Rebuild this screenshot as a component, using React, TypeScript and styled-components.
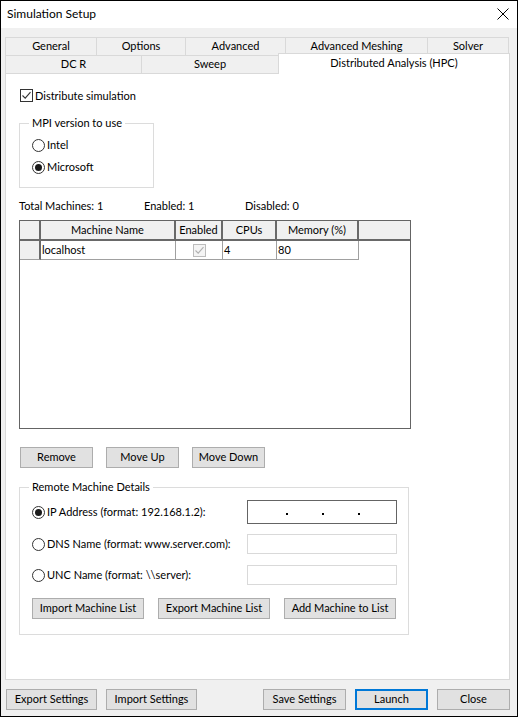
import React from "react";
import styled, { createGlobalStyle, css } from "styled-components";

const GlobalStyle = createGlobalStyle`
  html, body { margin: 0; padding: 0; background: #ffffff; }
  body {
    font-family: Lato, "Noto Sans", sans-serif;
    font-size: 11px;
    line-height: 14px;
    color: #000;
  }
  * { box-sizing: border-box; }
`;

const Window = styled.div`
  width: 518px;
  height: 717px;
  border: 1px solid #000;
  display: flex;
  flex-direction: column;
  background: #f0f0f0;
`;

const TitleBar = styled.div`
  height: 27px;
  flex: none;
  background: #fff;
  display: flex;
  align-items: center;
  justify-content: space-between;
  padding: 0 8px 1px 6px;
  font-size: 12px;
`;

const Body = styled.div`
  flex: 1;
  display: flex;
  flex-direction: column;
  padding: 9px 7px 0 4px;
`;

const TabRow = styled.div`
  display: flex;
  height: 18px;
  flex: none;
  align-items: flex-end;
`;

const Tab = styled.div<{ $w: number; $last?: boolean; $active?: boolean }>`
  width: ${(p) => p.$w}px;
  height: 18px;
  border-top: 1px solid #d9d9d9;
  border-left: 1px solid #d9d9d9;
  ${(p) => p.$last && css`border-right: 1px solid #d9d9d9;`}
  background: #f0f0f0;
  display: flex;
  align-items: center;
  justify-content: center;
  padding-bottom: 1px;
  ${(p) =>
    p.$active &&
    css`
      height: 21px;
      margin-top: -2px;
      margin-bottom: -1px;
      background: #fff;
      position: relative;
      z-index: 1;
      padding-bottom: 3px;
    `}
`;

const Panel = styled.div`
  width: 505px;
  height: 607px;
  flex: none;
  border: 1px solid #d9d9d9;
  background: #fff;
  display: flex;
  flex-direction: column;
  padding-left: 13px;
`;

const CheckRow = styled.label`
  margin-top: 15px;
  margin-left: 1px;
  height: 13px;
  display: flex;
  align-items: center;
  gap: 2px;
`;

const Box = styled.span<{ $disabled?: boolean }>`
  width: 13px;
  height: 13px;
  border: 1px solid ${(p) => (p.$disabled ? "#bcbcbc" : "#333")};
  background: ${(p) => (p.$disabled ? "#f4f4f4" : "#fff")};
  display: inline-flex;
  align-items: center;
  justify-content: center;
  flex: none;
`;

const Check = ({ disabled }: { disabled?: boolean }) => (
  <Box $disabled={disabled}>
    <svg width="11" height="11" viewBox="0 0 11 11">
      <path
        d="M1.5 5.5 L4.2 8.2 L9.5 2.2"
        fill="none"
        stroke={disabled ? "#b0b0b0" : "#333"}
        strokeWidth="1.1"
      />
    </svg>
  </Box>
);

const RadioCircle = styled.span<{ $on?: boolean }>`
  width: 13px;
  height: 13px;
  border-radius: 50%;
  border: 1px solid #333;
  background: #fff;
  display: inline-flex;
  align-items: center;
  justify-content: center;
  flex: none;
  &::after {
    content: "";
    width: 7px;
    height: 7px;
    border-radius: 50%;
    background: ${(p) => (p.$on ? "#1a1a1a" : "transparent")};
  }
`;

const RadioRow = styled.label<{ $top: number }>`
  margin-top: ${(p) => p.$top}px;
  height: 16px;
  display: flex;
  align-items: center;
  gap: 2px;
`;

const Group = styled.div<{ $w: number; $h: number; $top: number }>`
  width: ${(p) => p.$w}px;
  height: ${(p) => p.$h}px;
  flex: none;
  margin-top: ${(p) => p.$top}px;
  border: 1px solid #dcdcdc;
  display: flex;
  flex-direction: column;
  padding-left: 12px;
`;

const Legend = styled.span`
  align-self: flex-start;
  margin-top: -8px;
  margin-left: -3px;
  height: 14px;
  line-height: 14px;
  padding: 0 3px;
  background: #fff;
`;

const Totals = styled.div`
  margin-top: 11px;
  height: 14px;
  display: flex;
  align-items: center;
`;

const Stat = styled.span<{ $w: number }>`
  width: ${(p) => p.$w}px;
`;

const Grid = styled.div`
  margin-top: 7px;
  width: 392px;
  height: 209px;
  flex: none;
  border: 1px solid #646464;
  background: #fff;
  display: flex;
  flex-direction: column;
`;

const GridRow = styled.div<{ $head?: boolean }>`
  display: flex;
  height: ${(p) => (p.$head ? 20 : 19)}px;
`;

const HeadCell = styled.div<{ $w?: number }>`
  ${(p) => (p.$w ? css`width: ${p.$w}px;` : css`flex: 1;`)}
  background: #f0f0f0;
  border-bottom: 2px solid #696969;
  ${(p) => p.$w && css`border-right: 2px solid #696969;`}
  display: flex;
  align-items: center;
  justify-content: center;
`;

const RowHead = styled.div`
  width: 21px;
  background: #f0f0f0;
  border-right: 2px solid #696969;
  border-bottom: 1px solid #a0a0a0;
`;

const Cell = styled.div<{ $w: number; $center?: boolean }>`
  width: ${(p) => p.$w}px;
  border-right: 1px solid #a0a0a0;
  border-bottom: 1px solid #a0a0a0;
  display: flex;
  align-items: center;
  justify-content: ${(p) => (p.$center ? "center" : "flex-start")};
  padding-left: ${(p) => (p.$center ? 0 : 1)}px;
`;

const ButtonRow = styled.div<{ $top: number; $gap: number; $left?: number }>`
  margin-top: ${(p) => p.$top}px;
  margin-left: ${(p) => p.$left ?? 0}px;
  display: flex;
  gap: ${(p) => p.$gap}px;
`;

const Button = styled.button<{ $w: number; $primary?: boolean }>`
  width: ${(p) => p.$w}px;
  height: 21px;
  background: #e1e1e1;
  border: 1px solid #adadad;
  font-family: inherit;
  font-size: 11px;
  line-height: 14px;
  color: #000;
  padding: 0 0 1px;
  margin: 0;
  display: flex;
  align-items: center;
  justify-content: center;
  ${(p) => p.$primary && css`border: 2px solid #0078d7;`}
`;

const FieldRow = styled.div<{ $top: number; $h: number }>`
  margin-top: ${(p) => p.$top}px;
  height: ${(p) => p.$h}px;
  display: flex;
  align-items: center;
`;

const FieldLabel = styled.label`
  width: 215px;
  display: flex;
  align-items: center;
  gap: 2px;
`;

const TextBox = styled.div<{ $focus?: boolean }>`
  width: 150px;
  height: 100%;
  background: #fff;
  border: 1px solid ${(p) => (p.$focus ? "#646464" : "#d9d9d9")};
  display: flex;
  align-items: center;
`;

const IpBox = styled(TextBox)`
  padding-left: 38px;
  gap: 34px;
`;

const Dot = styled.span`
  width: 2px;
  height: 2px;
  background: #000;
  margin-top: 4px;
`;

const BottomBar = styled.div`
  margin-top: 9px;
  margin-left: 1px;
  display: flex;
  gap: 9px;
`;

const Spacer = styled.div`
  flex: 1;
`;

const App = () => (
  <>
    <GlobalStyle />
    <Window>
      <TitleBar>
        <span>Simulation Setup</span>
        <svg width="12" height="12" viewBox="0 0 12 12">
          <path d="M0.5 0.5 L11.5 11.5 M11.5 0.5 L0.5 11.5" stroke="#000" strokeWidth="1" />
        </svg>
      </TitleBar>
      <Body>
        <TabRow>
          <Tab $w={91}>General</Tab>
          <Tab $w={89}>Options</Tab>
          <Tab $w={100}>Advanced</Tab>
          <Tab $w={142}>Advanced Meshing</Tab>
          <Tab $w={82} $last>Solver</Tab>
        </TabRow>
        <TabRow>
          <Tab $w={136}>DC R</Tab>
          <Tab $w={137}>Sweep</Tab>
          <Tab $w={232} $last $active>Distributed Analysis (HPC)</Tab>
        </TabRow>
        <Panel>
          <CheckRow>
            <Check />
            <span>Distribute simulation</span>
          </CheckRow>

          <Group $w={135} $h={65} $top={21}>
            <Legend>MPI version to use</Legend>
            <RadioRow $top={7}>
              <RadioCircle />
              <span>Intel</span>
            </RadioRow>
            <RadioRow $top={6}>
              <RadioCircle $on />
              <span>Microsoft</span>
            </RadioRow>
          </Group>

          <Totals>
            <Stat $w={125}>Total Machines: 1</Stat>
            <Stat $w={101}>Enabled: 1</Stat>
            <Stat $w={80}>Disabled: 0</Stat>
          </Totals>

          <Grid>
            <GridRow $head>
              <HeadCell $w={21} />
              <HeadCell $w={135}>Machine Name</HeadCell>
              <HeadCell $w={47}>Enabled</HeadCell>
              <HeadCell $w={54}>CPUs</HeadCell>
              <HeadCell $w={82}>Memory (%)</HeadCell>
              <HeadCell />
            </GridRow>
            <GridRow>
              <RowHead />
              <Cell $w={135}>localhost</Cell>
              <Cell $w={47} $center>
                <Check disabled />
              </Cell>
              <Cell $w={54}>4</Cell>
              <Cell $w={82}>80</Cell>
            </GridRow>
          </Grid>

          <ButtonRow $top={18} $gap={13} $left={1}>
            <Button $w={73}>Remove</Button>
            <Button $w={73}>Move Up</Button>
            <Button $w={73}>Move Down</Button>
          </ButtonRow>

          <Group $w={390} $h={148} $top={19}>
            <Legend>Remote Machine Details</Legend>
            <FieldRow $top={6} $h={24}>
              <FieldLabel>
                <RadioCircle $on />
                <span>IP Address (format: 192.168.1.2):</span>
              </FieldLabel>
              <IpBox $focus>
                <Dot />
                <Dot />
                <Dot />
              </IpBox>
            </FieldRow>
            <FieldRow $top={10} $h={20}>
              <FieldLabel>
                <RadioCircle />
                <span>DNS Name (format: www.server.com):</span>
              </FieldLabel>
              <TextBox />
            </FieldRow>
            <FieldRow $top={11} $h={20}>
              <FieldLabel>
                <RadioCircle />
                <span>UNC Name (format: \\server):</span>
              </FieldLabel>
              <TextBox />
            </FieldRow>
            <ButtonRow $top={13} $gap={14}>
              <Button $w={112}>Import Machine List</Button>
              <Button $w={112}>Export Machine List</Button>
              <Button $w={112}>Add Machine to List</Button>
            </ButtonRow>
          </Group>
        </Panel>

        <BottomBar>
          <Button $w={91}>Export Settings</Button>
          <Button $w={91}>Import Settings</Button>
          <Spacer />
          <Button $w={83}>Save Settings</Button>
          <Button $w={73} $primary>Launch</Button>
          <Button $w={73}>Close</Button>
        </BottomBar>
      </Body>
    </Window>
  </>
);

export default App;
